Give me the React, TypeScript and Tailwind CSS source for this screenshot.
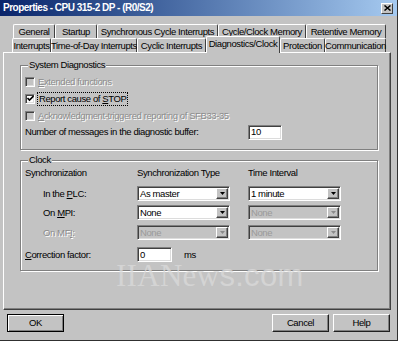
import React from "react";

const GRAY = "bg-[#c3c3c3]";

function Tab({ w, label, selected }: { w: number; label: string; selected?: boolean }) {
  return (
    <div
      style={{ width: w }}
      className={
        "flex items-center justify-center border-t border-l border-white border-r border-r-[#404040] rounded-tl-[2px] rounded-tr-[2px] shrink-0 whitespace-nowrap " +
        GRAY +
        (selected ? " relative z-10 h-[17px] -mt-[2px] -mb-[1px] pb-[2px]" : " h-[14px]")
      }
    >
      {label}
    </div>
  );
}

function Sunken({ className, children }: { className?: string; children?: React.ReactNode }) {
  return (
    <div
      className={
        "border-t border-l border-[#808080] border-b border-r border-b-white border-r-white shadow-[inset_1px_1px_0_#404040,inset_-1px_-1px_0_#dcdcdc] " +
        (className || "")
      }
    >
      {children}
    </div>
  );
}

function Select({ value, disabled }: { value: string; disabled?: boolean }) {
  return (
    <Sunken className={"w-[93px] h-[15px] flex items-center pl-[2px] pr-[1px] " + (disabled ? GRAY : "bg-white")}>
      <span className={"flex-1 " + (disabled ? "text-[#9a9a9a]" : "text-black")}>{value}</span>
      <div className="w-[12px] h-[11px] bg-[#c3c3c3] border-t border-l border-white border-b border-r border-b-[#404040] border-r-[#404040] shadow-[inset_-1px_-1px_0_#808080] flex items-center justify-center">
        <svg width="5" height="3" viewBox="0 0 5 3">
          <path d="M0 0 H5 L2.5 3 Z" fill={disabled ? "#8a8a8a" : "#000"} />
        </svg>
      </div>
    </Sunken>
  );
}

function Checkbox({ checked, disabled }: { checked?: boolean; disabled?: boolean }) {
  return (
    <Sunken className={"w-[10px] h-[10px] flex items-center justify-center shrink-0 " + (disabled ? GRAY : "bg-white")}>
      {checked && (
        <svg width="7" height="7" viewBox="0 0 7 7">
          <path d="M0.5 3 L2.5 5 L6.5 1" stroke="#000" strokeWidth="1.6" fill="none" />
        </svg>
      )}
    </Sunken>
  );
}

const dis = "text-[#8c8c8c] [text-shadow:1px_1px_0_#ffffff]";

function Group({ title, className, children }: { title: string; className?: string; children?: React.ReactNode }) {
  return (
    <fieldset
      className={
        "ml-[16px] w-[358px] border border-[#808080] shadow-[inset_1px_1px_0_#fff,1px_1px_0_#fff] pl-[4px] " + (className || "")
      }
    >
      <legend className={"ml-[3px] px-[1px] leading-[12px] " + GRAY}>{title}</legend>
      {children}
    </fieldset>
  );
}

function Button({ label, def }: { label: string; def?: boolean }) {
  return (
    <div
      className={
        "w-[57px] h-[18px] flex items-center justify-center " +
        (def
          ? "border border-black shadow-[inset_1px_1px_0_#fff,inset_-1px_-1px_0_#808080]"
          : "border-t border-l border-white border-b border-r border-b-[#202020] border-r-[#202020] shadow-[inset_-1px_-1px_0_#808080]")
      }
    >
      {label}
    </div>
  );
}

export default function App() {
  return (
    <div
      className={
        "relative w-[398px] h-[341px] overflow-hidden text-black text-[9.5px] leading-[12px] tracking-[-0.4px] font-['Liberation_Sans',Arial,sans-serif] border-r border-b border-[#303030] " +
        GRAY
      }
    >
      {/* Title bar */}
      <div className="h-[16px] flex items-center justify-between pl-[3px] pr-[3px] bg-linear-to-r from-[#0a246a] to-[#a6caf0]">
        <span className="text-white font-bold tracking-[-0.5px] text-[10px]">Properties - CPU 315-2 DP - (R0/S2)</span>
        <div className="w-[12px] h-[11px] mr-[1px] bg-[#c3c3c3] border-t border-l border-white border-b border-r border-b-[#404040] border-r-[#404040] flex items-center justify-center">
          <svg width="7" height="6" viewBox="0 0 7 6">
            <path d="M0.5 0.5 L6.5 5.5 M6.5 0.5 L0.5 5.5" stroke="#000" strokeWidth="1.5" />
          </svg>
        </div>
      </div>

      {/* Tabs */}
      <div className="pt-[8px] pl-[3px]">
        <div className="flex ml-[10px]">
          <Tab w={42} label="General" />
          <Tab w={42} label="Startup" />
          <Tab w={121} label="Synchronous Cycle Interrupts" />
          <Tab w={88} label="Cycle/Clock Memory" />
          <Tab w={80} label="Retentive Memory" />
        </div>
        <div className="flex ml-[9px] items-end">
          <Tab w={39} label="Interrupts" />
          <Tab w={86} label="Time-of-Day Interrupts" />
          <Tab w={69} label="Cyclic Interrupts" />
          <Tab w={74} label="Diagnostics/Clock" selected />
          <Tab w={45} label="Protection" />
          <Tab w={61} label="Communication" />
        </div>

        {/* Panel */}
        <div className="w-[388px] h-[258px] border-t border-l border-white border-r border-b border-r-[#404040] border-b-[#404040] shadow-[inset_-1px_-1px_0_#808080] pt-[6px]">
          <Group title="System Diagnostics" className="h-[91px] pt-[2px]">
            <div className="flex items-center h-[17px] gap-[3px]">
              <Checkbox disabled />
              <span className={dis}>
                <u>E</u>xtended functions
              </span>
            </div>
            <div className="flex items-center h-[17px] gap-[3px]">
              <Checkbox checked />
              <span className="outline outline-1 outline-dotted outline-black px-[1px]">
                Report cause of <u>S</u>TOP
              </span>
            </div>
            <div className="flex items-center h-[17px] gap-[3px]">
              <Checkbox disabled />
              <span className={dis}>
                <u>A</u>cknowledgment-triggered reporting of SFB33-35
              </span>
            </div>
            <div className="flex items-center h-[16px]">
              <span className="w-[223px]">
                Number of messages in the dia<u>g</u>nostic buffer:
              </span>
              <Sunken className="w-[34px] h-[15px] bg-white flex items-center pl-[2px]">10</Sunken>
            </div>
          </Group>

          <Group title="Clock" className="mt-[4px] h-[117px] pt-[0px]">
            <div className="flex items-center h-[14px]">
              <span className="w-[112px]">Synchronization</span>
              <span className="w-[111px]">Synchronization Type</span>
              <span>Time Interval</span>
            </div>
            <div className="flex items-center h-[15px] mt-[6px]">
              <span className="w-[112px] pl-[18px]">
                In the <u>P</u>LC:
              </span>
              <Select value="As master" />
              <div className="w-[18px]" />
              <Select value="1 minute" />
            </div>
            <div className="flex items-center h-[15px] mt-[4px]">
              <span className="w-[112px] pl-[18px]">
                On <u>M</u>PI:
              </span>
              <Select value="None" />
              <div className="w-[18px]" />
              <Select value="None" disabled />
            </div>
            <div className="flex items-center h-[15px] mt-[5px]">
              <span className={"w-[112px] pl-[18px] " + dis}>
                On MF<u>I</u>:
              </span>
              <Select value="None" disabled />
              <div className="w-[18px]" />
              <Select value="None" disabled />
            </div>
            <div className="flex items-center h-[15px] mt-[7px]">
              <span className="w-[112px]">
                <u>C</u>orrection factor:
              </span>
              <Sunken className="w-[35px] h-[15px] bg-white flex items-center pl-[2px]">0</Sunken>
              <span className="ml-[12px]">ms</span>
            </div>
          </Group>
        </div>

        {/* Buttons */}
        <div className="flex mt-[4px] ml-[4px]">
          <Button label="OK" def />
          <div className="w-[208px]" />
          <Button label="Cancel" />
          <div className="w-[4px]" />
          <Button label="Help" />
        </div>
      </div>

      {/* Watermark */}
      <div className="absolute left-[116px] top-[260px] text-[31px] leading-[32px] tracking-[0.3px] text-[#dadada]/75 pointer-events-none whitespace-nowrap">
        <span className="font-['Liberation_Serif',serif]">IIANew</span>
        <span className="font-['Liberation_Sans',sans-serif]">s.com</span>
      </div>
    </div>
  );
}
